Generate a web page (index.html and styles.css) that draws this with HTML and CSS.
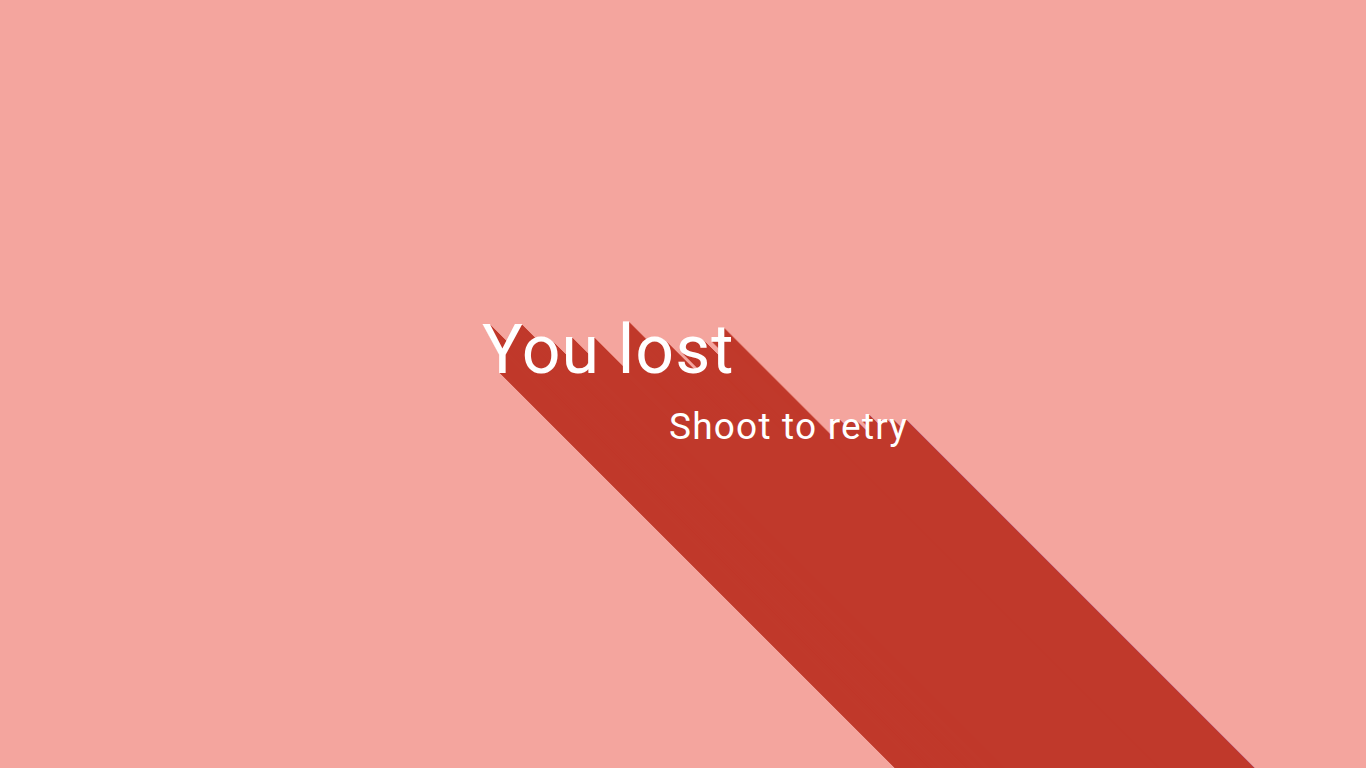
FILE: index.html
```html
<!DOCTYPE html>
<html lang="en">
<head>
<meta charset="utf-8">
<title>You lost</title>
<link rel="stylesheet" href="styles.css">
</head>
<body>
<main class="screen">
  <div class="message">
    <h1 class="title long-shadow">You lost</h1>
    <p class="subtitle long-shadow">Shoot to retry</p>
  </div>
</main>
<script src="script.js"></script>
</body>
</html>
```
FILE: styles.css
```css
html, body {
  margin: 0;
  padding: 0;
  height: 100%;
  overflow: hidden;
}
body {
  background: #f4a59e;
  font-family: Roboto, "Noto Sans", sans-serif;
  color: #ffffff;
}
.screen {
  width: 100%;
  height: 100%;
  padding-top: 316px;
  padding-left: 482px;
  box-sizing: border-box;
}
.message {
  display: flex;
  flex-direction: column;
  width: 426px;
  gap: 24px;
}
.title {
  margin: 0;
  font-size: 68px;
  font-weight: 400;
  line-height: 1;
  letter-spacing: 1px;
  align-self: flex-start;
  white-space: nowrap;
}
.subtitle {
  margin: 0;
  font-size: 37px;
  font-weight: 400;
  line-height: 1;
  letter-spacing: 1.2px;
  align-self: flex-end;
  white-space: nowrap;
}
```
FILE: script.js
```js
(function () {
  var parts = [];
  for (var i = 1; i <= 700; i++) {
    parts.push(i + 'px ' + i + 'px 0 #c0392b');
  }
  var shadow = parts.join(',');
  var els = document.querySelectorAll('.long-shadow');
  for (var j = 0; j < els.length; j++) {
    els[j].style.textShadow = shadow;
  }
})();
```
